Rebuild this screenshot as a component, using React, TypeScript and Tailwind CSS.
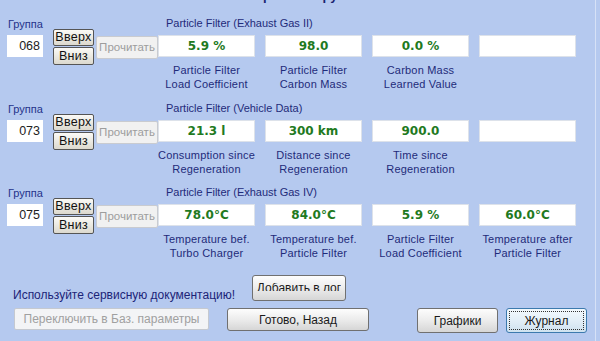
import React from 'react';

type Group = {
  num: string;
  title: string;
  values: string[];
  labels: [string, string][];
  h: string;
};

const groups: Group[] = [
  {
    num: '068',
    title: 'Particle Filter (Exhaust Gas II)',
    values: ['5.9 %', '98.0', '0.0 %', ''],
    labels: [
      ['Particle Filter', 'Load Coefficient'],
      ['Particle Filter', 'Carbon Mass'],
      ['Carbon Mass', 'Learned Value'],
      ['', ''],
    ],
    h: 'h-[85px]',
  },
  {
    num: '073',
    title: 'Particle Filter (Vehicle Data)',
    values: ['21.3 l', '300 km', '900.0', ''],
    labels: [
      ['Consumption since', 'Regeneration'],
      ['Distance since', 'Regeneration'],
      ['Time since', 'Regeneration'],
      ['', ''],
    ],
    h: 'h-[84px]',
  },
  {
    num: '075',
    title: 'Particle Filter (Exhaust Gas IV)',
    values: ['78.0°C', '84.0°C', '5.9 %', '60.0°C'],
    labels: [
      ['Temperature bef.', 'Turbo Charger'],
      ['Temperature bef.', 'Particle Filter'],
      ['Particle Filter', 'Load Coefficient'],
      ['Temperature after', 'Particle Filter'],
    ],
    h: 'h-[84px]',
  },
];

const smallBtn =
  'w-[41px] border border-[#555555] rounded-[2px] bg-linear-to-b from-[#fbfaf6] to-[#dcd9ce] text-[12.5px] tracking-[0.3px] leading-none text-[#111] flex items-center justify-center';

const winBtn =
  'border border-[#707070] rounded-[3px] bg-linear-to-b from-[#fdfdfd] via-[#ececec] to-[#d6d6d6] text-[12px] text-[#1a1a1a] flex items-center justify-center';

const GroupRow: React.FC<{ g: Group }> = ({ g }) => (
  <div className={`${g.h} flex`}>
    <div className="w-[158px] pl-[7px] flex flex-col">
      <div className="h-[15px] pt-[5px] pl-[1px] text-[11px] leading-[11px] text-[#24338a]">Группа</div>
      <div className="flex items-start">
        <div className="mt-[6px] w-[36px] h-[22px] bg-white text-right pr-[3px] text-[12.5px] leading-[22px] text-[#222]">
          {g.num}
        </div>
        <div className="ml-[10px] flex flex-col gap-[1px]">
          <button className={`${smallBtn} h-[17px]`}>Вверх</button>
          <button className={`${smallBtn} h-[18px]`}>Вниз</button>
        </div>
        <button
          disabled
          className="ml-[2px] mt-[7px] w-[62px] h-[23px] border border-[#c9cbd0] rounded-[2px] bg-[#f1f1f1] text-[11.5px] text-[#9d9d9d] flex items-center justify-center"
        >
          Прочитать
        </button>
      </div>
    </div>
    <div className="flex flex-col">
      <div className="h-[21px] pl-[8px] pt-[4px] text-[11px] leading-[11px] text-[#1f2b7a]">{g.title}</div>
      <div className="flex gap-[10px]">
        {g.values.map((v, i) => (
          <div
            key={i}
            className="w-[97px] h-[22px] bg-white border border-[#dde2ea] flex items-center justify-center font-['DejaVu_Sans',sans-serif] font-bold text-[12px] text-[#1f7a1f]"
          >
            {v}
          </div>
        ))}
      </div>
      <div className="flex gap-[10px] mt-[6px]">
        {g.labels.map((l, i) => (
          <div key={i} className="w-[97px] text-center text-[11px] tracking-[0.2px] leading-[14px] text-[#1f2b7a]">
            <div>{l[0]}</div>
            <div>{l[1]}</div>
          </div>
        ))}
      </div>
    </div>
  </div>
);

export default function App() {
  return (
    <div className="w-[600px] h-[341px] bg-[#b5c9ef] flex overflow-hidden font-['Liberation_Sans',Arial,sans-serif]">
      <div className="w-[596px] border-r border-[#d6e1f6] flex flex-col">
        <div className="h-[14px] overflow-hidden text-center">
          <div className="-mt-[11px] text-[13px] font-bold leading-[14px] text-[#1b2470]">Измеряемые группы</div>
        </div>

        {groups.map(g => (
          <GroupRow key={g.num} g={g} />
        ))}

        <div className="mt-[8px] h-[26px] flex items-end">
          <div className="w-[252px] pl-[13px] mb-[-1px] text-[12px] leading-[14px] text-[#1c2478]">
            Используйте сервисную документацию!
          </div>
          <button className={`${winBtn} w-[94px] h-[26px] items-start pt-[7px]`}>
            <span className="block h-[8px] overflow-hidden">
              <span className="block -mt-[2px] leading-[14px]">Добавить в лог</span>
            </span>
          </button>
        </div>

        <div className="mt-[7px] flex items-start">
          <button
            disabled
            className="ml-[14px] w-[195px] h-[22px] border border-[#c5c9d0] rounded-[2px] bg-[#f3f4f6] text-[12px] text-[#a0a0a0] flex items-center justify-center"
          >
            Переключить в Баз. параметры
          </button>
          <button className={`${winBtn} ml-[18px] w-[142px] h-[23px]`}>Готово, Назад</button>
          <button className={`${winBtn} ml-[48px] w-[81px] h-[25px]`}>Графики</button>
          <button className="ml-[8px] w-[81px] h-[25px] border border-[#3c7aae] rounded-[3px] bg-linear-to-b from-[#f3f9fd] via-[#e3eff8] to-[#cfe2ef] text-[12px] text-[#1a1a1a] flex items-center justify-center outline-1 outline-dotted outline-[#333] -outline-offset-4">
            Журнал
          </button>
        </div>
      </div>
    </div>
  );
}
